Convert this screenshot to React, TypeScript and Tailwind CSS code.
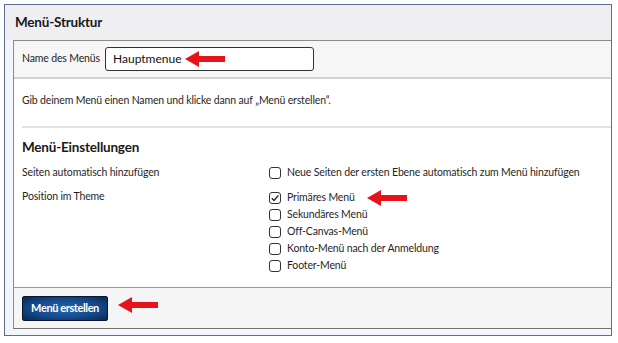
import React from "react";

function Arrow({ className }: { className?: string }) {
  return (
    <svg className={className} width="40" height="16" viewBox="0 0 40 16">
      <polygon points="0,8 14,0 14,5 40,5 40,11 14,11 14,16" fill="#e5141b" />
    </svg>
  );
}

function Box({ checked }: { checked?: boolean }) {
  return (
    <span className="w-[12px] h-[12px] border border-[#333] rounded-[3px] bg-white flex items-center justify-center shrink-0">
      {checked && (
        <svg width="10" height="10" viewBox="0 0 10 10">
          <path d="M1.8 5.2 L4 7.4 L8.4 2.4" fill="none" stroke="#222" strokeWidth="1.4" />
        </svg>
      )}
    </span>
  );
}

function Opt({ label, checked }: { label: string; checked?: boolean }) {
  return (
    <div className="flex items-center gap-[6px] h-[17px] whitespace-nowrap">
      <Box checked={checked} />
      <span>{label}</span>
    </div>
  );
}

export default function App() {
  return (
    <div
      className="w-[618px] h-[343px] bg-white pt-[4px] pl-[4px] text-[10.5px] tracking-[-0.15px] text-[#1f1f1f] whitespace-nowrap"
      style={{ fontFamily: 'Lato, "Open Sans", sans-serif' }}
    >
      <div className="w-[608px] h-[332px] border border-[#5d6f8d] bg-[#f3f6fc] flex flex-col">
        <div className="h-[35px] bg-[#efeff1] pl-[10px] flex items-center text-[13.5px] tracking-[-0.2px] font-bold text-[#1a1a1a]">
          Menü-Struktur
        </div>
        <div className="ml-[8px] h-[289px] border-l border-t border-b border-[#8c8c8c] border-b-[#77706a] flex flex-col">
          <div className="h-[38px] bg-[#f6f6f6] border-b-2 border-[#d2d2d2] flex items-center pl-[8px]">
            <span className="w-[83px]">Name des Menüs</span>
            <div className="relative w-[209px] h-[24px] border border-[#333] rounded-[3px] bg-white flex items-center pl-[7px] text-[12px] tracking-normal text-[#111]">
              Hauptmenue
              <Arrow className="absolute left-[79px] top-[3px]" />
            </div>
          </div>
          <div className="flex-1 bg-white flex flex-col pl-[8px] border-b border-[#9a9a9a]">
            <div className="h-[44px] flex items-center">
              Gib deinem Menü einen Namen und klicke dann auf „Menü erstellen“.
            </div>
            <div className="h-[2px] mt-[3px] bg-[#e2e2e2]" />
            <div className="h-[34px] flex items-center pt-[5px] text-[13.5px] tracking-[-0.2px] font-bold text-[#1a1a1a]">
              Menü-Einstellungen
            </div>
            <div className="flex h-[22px] items-center">
              <span className="w-[247px]">Seiten automatisch hinzufügen</span>
              <Opt label="Neue Seiten der ersten Ebene automatisch zum Menü hinzufügen" />
            </div>
            <div className="flex pt-[5px]">
              <span className="w-[247px] leading-[12px] pt-[1px]">Position im Theme</span>
              <div className="flex flex-col">
                <div className="flex items-center">
                  <Opt label="Primäres Menü" checked />
                  <Arrow className="ml-[12px]" />
                </div>
                <Opt label="Sekundäres Menü" />
                <Opt label="Off-Canvas-Menü" />
                <Opt label="Konto-Menü nach der Anmeldung" />
                <Opt label="Footer-Menü" />
              </div>
            </div>
          </div>
          <div className="h-[40px] bg-[#f5f5f5] flex items-center pl-[8px]">
            <button
              className="w-[86px] h-[25px] rounded-[2px] border border-[#061633] text-white text-[11px] font-bold tracking-[-0.4px] flex items-center justify-center"
              style={{ background: "radial-gradient(ellipse at 50% 50%, #2466b3 0%, #154a8c 55%, #0a2752 100%)" }}
            >
              Menü erstellen
            </button>
            <Arrow className="ml-[10px] mb-[6px]" />
          </div>
        </div>
      </div>
    </div>
  );
}
